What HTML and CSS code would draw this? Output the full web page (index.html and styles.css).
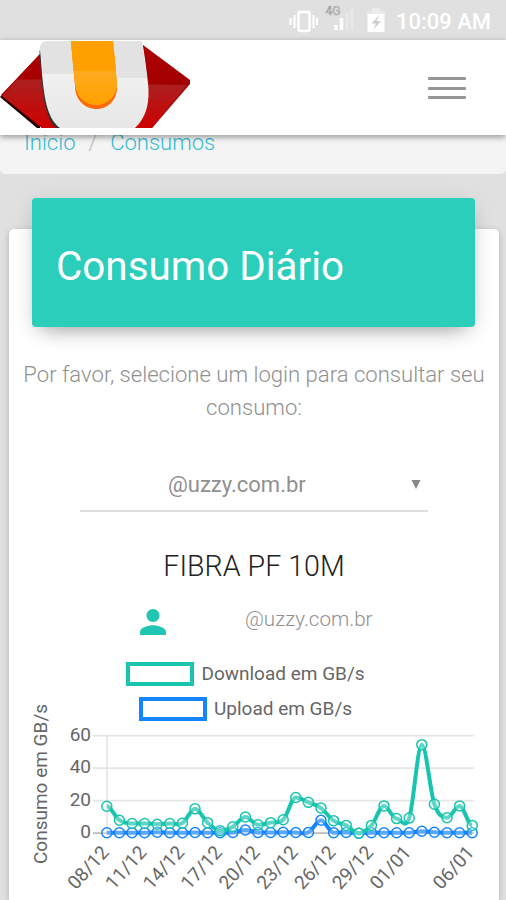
FILE: index.html
```html
<!DOCTYPE html>
<html lang="pt-br">
<head>
    <meta charset="UTF-8">
    <meta name="viewport" content="width=device-width, initial-scale=1.0">
    <title>Consumos</title>
    <link rel="stylesheet" href="styles.css">
</head>
<body>
    <div class="status-bar">
        <svg class="status-icons" width="96" height="40" viewBox="288 0 96 40">
            <!-- Vibrar -->
            <rect x="297.5" y="12" width="11" height="19" rx="1.5" fill="none" stroke="#fff" stroke-width="2.5"/>
            <path d="M293.5 15v13M312.5 15v13M289.5 18v7M316 18v7" stroke="#fff" stroke-width="2"/>
            <!-- Sinal -->
            <path d="M335 25v5M340.500 18v12" stroke="#fff" stroke-width="3.500"/>
            <path d="M346 13v17M351 9v21" stroke="#e8e8e8" stroke-width="3"/>
            <text x="324.500" y="15" class="network">4G</text>
            <!-- Bateria -->
            <path d="M366.500 12h5V8.500h7V12h5v20h-17z" fill="#fff"/>
            <path d="M366.500 14v-2.500h5V8h7v3.500h5V14z" fill="#ebebeb"/>
            <path d="M378.500 15l-8 8.500h4.500l-2.500 6 7.500-8.500h-4.500z" fill="#ccc"/>
        </svg>
        <span class="clock">10:09 AM</span>
    </div>

    <header>
        <svg class="logo" width="192" height="87" viewBox="0 0 192 87">
            <defs>
                <linearGradient id="red" x1="0" y1="0" x2="0" y2="1">
                    <stop offset="0" stop-color="#ab2020"/>
                    <stop offset="1" stop-color="#ce0000"/>
                </linearGradient>
                <linearGradient id="dark-red" x1="0" y1="0" x2="0" y2="1">
                    <stop offset="0" stop-color="#b00000"/>
                    <stop offset="1" stop-color="#930000"/>
                </linearGradient>
                <linearGradient id="silver" x1="0" y1="0" x2="0" y2="1">
                    <stop offset="0" stop-color="#f6f6f6"/>
                    <stop offset="1" stop-color="#e7e7e7"/>
                </linearGradient>
                <linearGradient id="orange" x1="0" y1="0" x2="0" y2="1">
                    <stop offset="0" stop-color="#ffb43b"/>
                    <stop offset="1" stop-color="#ffa100"/>
                </linearGradient>
            </defs>
            <path d="M0 56L40 13V87H37z" fill="#220000"/>
            <path d="M1 54L40 13L56 87H42z" fill="url(#dark-red)"/>
            <path d="M17 38.500H44L57 87H42L2 55z" fill="url(#red)"/>
            <path d="M143 4L190 39V43L152 87H135z" fill="url(#dark-red)"/>
            <path d="M147 43.500L187 44L152 87H135z" fill="url(#red)"/>
            <path d="M39.500 10L42 6L60 87H56C44 76 42 50 39.500 10z" fill="#333"/>
            <path d="M40 6Q41 0 48 0H142Q145 15 148 42C150 60 147 76 135 87H60C46 77 44 52 42 33z" fill="url(#silver)"/>
            <path d="M40 6Q41 0 48 0H142L147 37H116L73 33H43z" fill="#e2e2e2"/>
            <path d="M71 0H113L117 45C118 59 107 68 97 68C84 68 75 58 75 45z" fill="#ff6a00"/>
            <path d="M71 0H113L117 42C118 55 107 64 97 64C84 64 76 55 75 42z" fill="url(#orange)"/>
            <path d="M71 0H113L116 30H73.500z" fill="#ffa000"/>
        </svg>
        <div class="menu-btn">
            <span></span>
            <span></span>
            <span></span>
        </div>
    </header>

    <nav class="breadcrumb">
        <a>Início</a>
        <i>/</i>
        <a>Consumos</a>
    </nav>

    <main class="card">
        <div class="card-header">
            <h1>Consumo Diário</h1>
        </div>
        <p class="intro">Por favor, selecione um login para consultar seu consumo:</p>

        <div class="select">
            <span>@uzzy.com.br</span>
            <svg width="10" height="11" viewBox="0 0 10 11"><path d="M.5 1h9L5 10z" fill="#888"/></svg>
        </div>

        <h2>FIBRA PF 10M</h2>

        <div class="user">
            <svg width="26" height="26" viewBox="4 4 16 16">
                <path d="M12 12c2.210 0 4-1.790 4-4s-1.790-4-4-4-4 1.790-4 4 1.790 4 4 4zm0 2c-2.670 0-8 1.340-8 4v2h16v-2c0-2.660-5.330-4-8-4z" fill="#21c6b3"/>
            </svg>
            <span>@uzzy.com.br</span>
        </div>

        <div class="legend">
            <div><span class="box download"></span>Download em GB/s</div>
            <div><span class="box upload"></span>Upload em GB/s</div>
        </div>

        <svg id="chart" class="chart" width="490" height="174" viewBox="9 726 490 174"></svg>
    </main>

    <script src="script.js"></script>
</body>
</html>
```
FILE: styles.css
```css
* {
    box-sizing: border-box;
}
body {
    font-family: Roboto, sans-serif;
    font-weight: 300;
    background: #e0e0e0;
    margin: 0;
    height: 900px;
    overflow: hidden;
}
.status-bar {
    display: flex;
    align-items: center;
    justify-content: flex-end;
    gap: 11px;
    height: 40px;
    padding-right: 15px;
    background: #e0e0e0;
}
.network {
    font-size: 12px;
    font-weight: 400;
    fill: #e8e8e8;
    stroke: #999;
    stroke-width: 0.6px;
}
.clock {
    font-size: 22px;
    font-weight: 500;
    color: #fff;
    padding-top: 2px;
}
header {
    position: relative;
    z-index: 2;
    display: flex;
    justify-content: space-between;
    height: 95px;
    padding: 1px 40px 0 0;
    background: #fff;
    box-shadow: 0 2px 6px rgba(0, 0, 0, 0.4);
}
.menu-btn {
    display: flex;
    flex-direction: column;
    gap: 6.5px;
    padding-top: 36px;
}
.menu-btn span {
    width: 38px;
    height: 3px;
    border-radius: 1px;
    background: #959595;
}
.breadcrumb {
    display: flex;
    gap: 13px;
    height: 49px;
    margin-top: -10px;
    padding: 5px 24px;
    border-radius: 5px;
    background: #f4f4f4;
    font-size: 22px;
    line-height: 26px;
    color: #36bdd1;
}
.breadcrumb i {
    font-style: normal;
    color: #bbb;
}
.card {
    height: 671px;
    margin: 55px 7px 0 9px;
    background: #fff;
    border-radius: 5px 5px 0 0;
    box-shadow: 0 2px 6px rgba(0, 0, 0, 0.22);
    color: #909090;
}
.card-header {
    display: flex;
    align-items: center;
    height: 129px;
    margin: 0 24px -31px 23px;
    padding: 7px 24px 0;
    transform: translateY(-31px);
    background: #2bcdbb;
    border-radius: 4px;
    box-shadow: 0 10px 20px -10px rgba(0, 0, 0, 0.4), 0 3px 24px rgba(0, 0, 0, 0.08);
}
.card-header h1 {
    margin: 0;
    font-size: 40.4px;
    font-weight: 400;
    color: #fff;
}
.intro {
    margin: 0;
    padding-top: 31px;
    text-align: center;
    font-size: 22.1px;
    line-height: 33px;
}
.select {
    display: flex;
    align-items: center;
    justify-content: space-between;
    width: 348px;
    height: 54px;
    margin: 34px 0 0 71px;
    padding: 0 7px 0 88px;
    border-bottom: 2px solid #ddd;
    font-size: 22px;
    font-weight: 400;
}
h2 {
    margin: 36px 0 0;
    text-align: center;
    font-size: 28.6px;
    line-height: 36px;
    font-weight: 300;
    color: #222;
}
.user {
    display: flex;
    gap: 79px;
    height: 31px;
    margin-top: 25px;
    padding-left: 131px;
    font-size: 20.6px;
    line-height: 21px;
}
.legend {
    display: flex;
    flex-direction: column;
    align-items: center;
    gap: 11px;
    margin-top: 22px;
    padding-right: 17px;
    font-size: 19px;
    line-height: 24px;
    font-weight: 400;
    color: #666;
}
.legend div {
    display: flex;
    align-items: center;
    gap: 7px;
}
.box {
    width: 68px;
    height: 24px;
    border: 4px solid #17c4ad;
}
.box.upload {
    border-color: #1585ff;
}
.chart {
    display: block;
    margin-top: 5px;
    overflow: visible;
}
.chart text {
    font-size: 19px;
    font-weight: 400;
    fill: #666;
}
.grid {
    stroke: #e5e5e5;
    stroke-width: 1.7;
}
.zero {
    stroke: #bbb;
}
.line, .point {
    fill: none;
    stroke: #17c4ad;
    stroke-width: 4;
}
.line {
    stroke-linejoin: round;
}
.point {
    stroke-width: 1.5;
    fill: #fff;
    fill-opacity: 0.3;
}
.upload .line, .upload .point {
    stroke: #1585ff;
}
```
FILE: script.js
```js
const chart = document.getElementById('chart');

const download = [16.6, 8, 6, 6, 5.5, 6, 6.2, 15, 6.5, 1.5, 4, 10, 5.2, 6.5, 8.3, 22, 19, 15.5, 7.7, 4.8, 0, 4.8, 16.8, 9, 9.3, 54.5, 17.8, 9.5, 16.8, 4.8];
const upload = [0.3, 0.3, 0.3, 0.3, 0.6, 0.3, 0.3, 0.4, 0.3, 0.3, 0.4, 2, 0.4, 0.4, 0.6, 0.4, 0.5, 8, 0.3, 0.5, 0, 0.3, 0.3, 0.3, 0.3, 1.2, 0.6, 0.3, 0.3, 0.3];
const labels = { 0: '08/12', 3: '11/12', 6: '14/12', 9: '17/12', 12: '20/12', 15: '23/12', 18: '26/12', 21: '29/12', 24: '01/01', 29: '06/01' };

const px = i => 106.8 + i * 12.6;
const py = v => 833.2 - v * 1.625;

// Curva suavizada entre os pontos
function curve(values) {
    let d = `M${px(0)} ${py(values[0])}`;
    const slope = i => {
        const a = values[i - 1], b = values[i], c = values[i + 1];
        if (a === undefined || c === undefined || (b - a) * (c - b) <= 0) return 0;
        return (c - a) / 2;
    };
    for (let i = 1; i < values.length; i++) {
        const y1 = py(values[i - 1] + slope(i - 1) / 3);
        const y2 = py(values[i] - slope(i) / 3);
        d += `C${px(i - 1) + 4.2} ${y1} ${px(i) - 4.2} ${y2} ${px(i)} ${py(values[i])}`;
    }
    return d;
}

function series(name, values) {
    const points = values.map((v, i) => `<circle class="point" cx="${px(i)}" cy="${py(v)}" r="5"/>`).join('');
    return `<g class="${name}"><path class="line" d="${curve(values)}"/>${points}</g>`;
}

let html = '<path class="grid" d="M107 736V833"/>';
[60, 40, 20, 0].forEach(v => {
    html += `<path class="grid ${v === 0 ? 'zero' : ''}" d="M93 ${py(v)}H474"/>`;
    html += `<text x="91" y="${py(v) + 5}" text-anchor="end">${v}</text>`;
});
html += series('upload', upload) + series('download', download);
for (const i in labels) {
    html += `<text transform="translate(${px(+i) + 3} 853) rotate(-48)" text-anchor="end">${labels[i]}</text>`;
}
html += '<text transform="translate(47 784) rotate(-90)" text-anchor="middle">Consumo em GB/s</text>';
chart.innerHTML = html;
```
